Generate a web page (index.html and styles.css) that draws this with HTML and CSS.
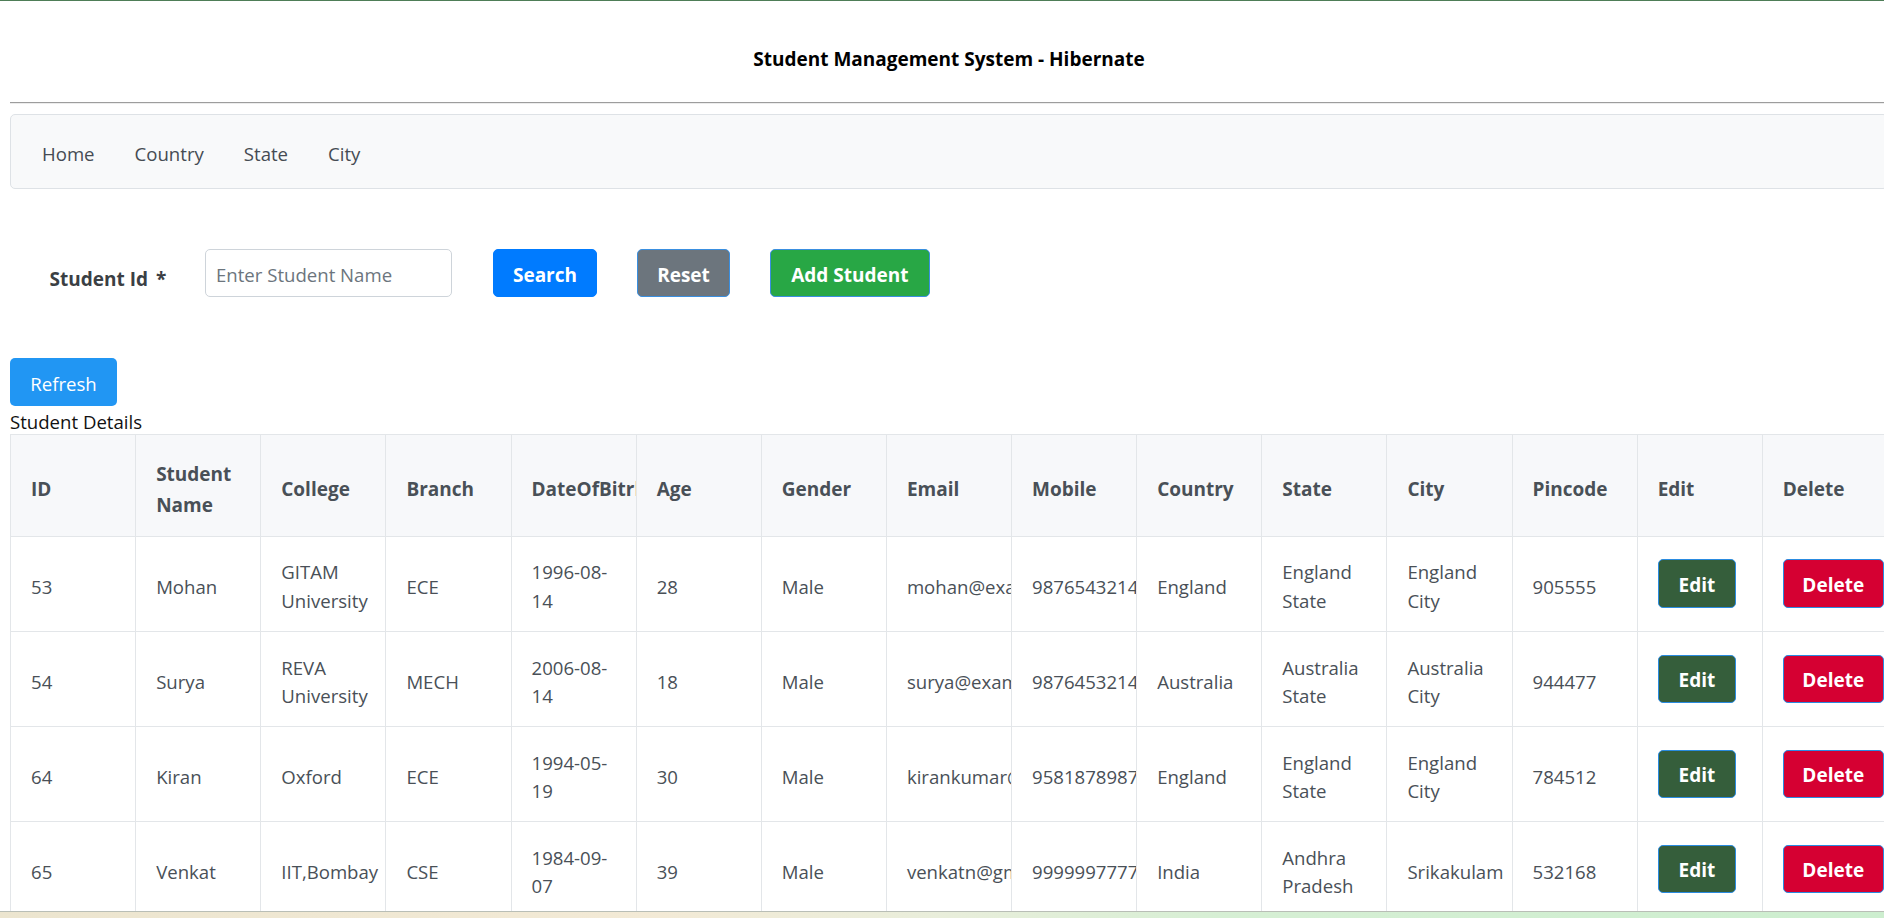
FILE: index.html
```html
<!DOCTYPE html>
<html lang="en">
<head>
<meta charset="utf-8">
<title>Student Management System - Hibernate</title>
<link rel="stylesheet" href="styles.css">
</head>
<body>
<div class="page">
  <h1 class="title">Student Management System - Hibernate</h1>
  <hr class="rule">
  <nav class="navbar">
    <ul class="nav">
      <li><a class="nav-link" href="#">Home</a></li>
      <li><a class="nav-link" href="#">Country</a></li>
      <li><a class="nav-link" href="#">State</a></li>
      <li><a class="nav-link" href="#">City</a></li>
    </ul>
  </nav>

  <form class="search">
    <label class="search-label">Student Id<span class="req">*</span></label>
    <input class="search-input" type="text" placeholder="Enter Student Name">
    <button type="button" class="btn btn-search">Search</button>
    <button type="button" class="btn btn-reset">Reset</button>
    <button type="button" class="btn btn-add">Add Student</button>
  </form>

  <button type="button" class="btn-refresh">Refresh</button>
  <div class="caption">Student Details</div>

  <table class="grid">
    <thead>
      <tr>
        <th>ID</th><th>Student Name</th><th>College</th><th>Branch</th><th>DateOfBitrh</th>
        <th>Age</th><th>Gender</th><th>Email</th><th>Mobile</th><th>Country</th>
        <th>State</th><th>City</th><th>Pincode</th><th>Edit</th><th>Delete</th>
      </tr>
    </thead>
    <tbody>
      <tr>
        <td>53</td><td>Mohan</td><td>GITAM University</td><td>ECE</td><td>1996-08-14</td>
        <td>28</td><td>Male</td><td>mohan@example.com</td><td>9876543214</td><td>England</td>
        <td>England State</td><td>England City</td><td>905555</td>
        <td class="act"><button type="button" class="btn-edit">Edit</button></td>
        <td class="act"><button type="button" class="btn-delete">Delete</button></td>
      </tr>
      <tr>
        <td>54</td><td>Surya</td><td>REVA University</td><td>MECH</td><td>2006-08-14</td>
        <td>18</td><td>Male</td><td>surya@example.com</td><td>9876453214</td><td>Australia</td>
        <td>Australia State</td><td>Australia City</td><td>944477</td>
        <td class="act"><button type="button" class="btn-edit">Edit</button></td>
        <td class="act"><button type="button" class="btn-delete">Delete</button></td>
      </tr>
      <tr>
        <td>64</td><td>Kiran</td><td>Oxford</td><td>ECE</td><td>1994-05-19</td>
        <td>30</td><td>Male</td><td>kirankumar@gmail.com</td><td>9581878987</td><td>England</td>
        <td>England State</td><td>England City</td><td>784512</td>
        <td class="act"><button type="button" class="btn-edit">Edit</button></td>
        <td class="act"><button type="button" class="btn-delete">Delete</button></td>
      </tr>
      <tr>
        <td>65</td><td>Venkat</td><td>IIT,Bombay</td><td>CSE</td><td>1984-09-07</td>
        <td>39</td><td>Male</td><td>venkatn@gmail.com</td><td>9999997777</td><td>India</td>
        <td>Andhra Pradesh</td><td>Srikakulam</td><td>532168</td>
        <td class="act"><button type="button" class="btn-edit">Edit</button></td>
        <td class="act"><button type="button" class="btn-delete">Delete</button></td>
      </tr>
    </tbody>
  </table>
</div>
<div class="taskbar"></div>
</body>
</html>
```

FILE: styles.css
```css
html, body {
  margin: 0;
  padding: 0;
  overflow: hidden;
  height: 100%;
}
body {
  font-family: "Open Sans", Lato, "Liberation Sans", sans-serif;
  font-size: 18.6px;
  line-height: 1.5;
  color: #212529;
  background: #fff;
  border-top: 1px solid #4e7d57;
  box-sizing: border-box;
}
.page {
  width: 1878px;
  margin-left: 10px;
}
.title {
  margin: 0;
  padding-top: 44px;
  font-size: 19px;
  line-height: 29px;
  font-weight: 700;
  color: #000;
  text-align: center;
}
.rule {
  margin: 28px 0 0 0;
  height: 0;
  border: 0;
  border-top: 1px solid #9d9d9d;
  border-bottom: 1px solid #ececec;
}
.navbar {
  margin-top: 10px;
  height: 74.5px;
  box-sizing: border-box;
  background: #f8f9fa;
  border: 1px solid #dee2e6;
  border-radius: 5px;
  display: flex;
  align-items: center;
}
.nav {
  list-style: none;
  margin: 0;
  padding: 5px 0 0 11px;
  display: flex;
}
.nav-link {
  display: block;
  padding: 0 20px;
  color: #454b53;
  text-decoration: none;
  line-height: 29px;
}
.search {
  margin: 60.3px 0 0 0;
  height: 48.6px;
  display: flex;
  align-items: center;
  padding-left: 39.6px;
}
.search-label {
  width: 155.4px;
  margin-top: 12px;
  font-weight: 700;
  font-size: 19px;
  color: #3b3f44;
  flex: none;
}
.req {
  margin-left: 8px;
}
.search-input {
  width: 247.5px;
  height: 48.6px;
  box-sizing: border-box;
  flex: none;
  border: 1px solid #ced4da;
  border-radius: 5px;
  padding: 3px 10px 0;
  font-family: inherit;
  font-size: 18.6px;
  color: #495057;
  background: #fff;
}
.search-input::placeholder {
  color: #6c757d;
}
.btn {
  flex: none;
  height: 48.6px;
  box-sizing: border-box;
  border: 1px solid #3a8fe0;
  border-radius: 5px;
  color: #fff;
  font-family: inherit;
  font-size: 19px;
  font-weight: 700;
  padding: 3px 0 0;
  text-align: center;
}
.btn-search {
  width: 104px;
  margin-left: 40.5px;
  background: #007bff;
  border-color: #007bff;
}
.btn-reset {
  width: 93px;
  margin-left: 40px;
  background: #6c757d;
}
.btn-add {
  width: 159.6px;
  margin-left: 40px;
  background: #28a745;
}
.btn-refresh {
  display: block;
  margin-top: 60.3px;
  width: 107px;
  height: 48.7px;
  box-sizing: border-box;
  border: 0;
  border-radius: 5px;
  background: #2196f3;
  color: #fff;
  font-family: inherit;
  font-size: 18.6px;
  padding: 3px 0 0;
}
.caption {
  height: 27.6px;
  line-height: 27.6px;
  padding-top: 2px;
  margin-bottom: -2px;
  color: #111;
}
.grid {
  width: 1878px;
  table-layout: fixed;
  border-collapse: collapse;
  border: 1px solid #dee2e6;
}
.grid th,
.grid td {
  border: 1px solid #e3e6e9;
  padding: 7px 20px 0;
  text-align: left;
  vertical-align: middle;
  overflow: hidden;
  color: #495057;
}
.grid thead tr {
  height: 101.7px;
}
.grid th {
  padding-top: 9px;
  background: #f7f8fa;
  font-weight: 700;
  font-size: 19px;
  line-height: 31px;
}
.grid tbody tr {
  height: 95.1px;
}
.grid td {
  line-height: 28.8px;
}
.grid td.act {
  padding-top: 0;
}
.btn-edit,
.btn-delete {
  display: inline-block;
  height: 48.6px;
  box-sizing: border-box;
  border: 1px solid #2a8be0;
  border-radius: 5px;
  color: #fff;
  font-family: inherit;
  font-size: 19px;
  font-weight: 700;
  padding: 3px 0 0;
  vertical-align: middle;
}
.btn-edit {
  width: 78.6px;
  background: #355e3b;
}
.btn-delete {
  width: 101px;
  background: #d50032;
}
.taskbar {
  position: fixed;
  left: 0;
  right: 0;
  bottom: 0;
  height: 6px;
  border-top: 1px solid #b9beb6;
  background: linear-gradient(90deg, #ece5cf 0%, #f3ead6 35%, #e9eedb 50%, #d6efd4 65%, #cdeecf 100%);
}
```
